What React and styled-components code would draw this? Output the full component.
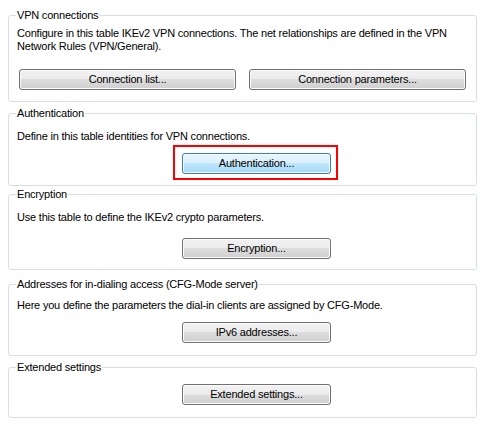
import React from "react";
import styled, { createGlobalStyle } from "styled-components";

const GlobalStyle = createGlobalStyle`
  html, body {
    margin: 0;
    padding: 0;
    background: #ffffff;
  }
  body {
    font-family: "Liberation Sans", Arial, sans-serif;
    font-size: 11px;
    letter-spacing: -0.2px;
    color: #000000;
  }
`;

const groups = [
  {
    title: "VPN connections",
    desc: "Configure in this table IKEv2 VPN connections. The net relationships are defined in the VPN Network Rules (VPN/General).",
    buttons: ["Connection list...", "Connection parameters..."],
    descGap: 5,
    btnGap: 16,
    pb: 11,
    mt: 0,
  },
  {
    title: "Authentication",
    desc: "Define in this table identities for VPN connections.",
    buttons: ["Authentication..."],
    highlight: true,
    descGap: 10,
    btnGap: 10,
    pb: 11,
    mt: 11,
  },
  {
    title: "Encryption",
    desc: "Use this table to define the IKEv2 crypto parameters.",
    buttons: ["Encryption..."],
    descGap: 10,
    btnGap: 14,
    pb: 10,
    mt: 8,
  },
  {
    title: "Addresses for in-dialing access (CFG-Mode server)",
    desc: "Here you define the parameters the dial-in clients are assigned by CFG-Mode.",
    buttons: ["IPv6 addresses..."],
    descGap: 8,
    btnGap: 10,
    pb: 12,
    mt: 14,
  },
  {
    title: "Extended settings",
    buttons: ["Extended settings..."],
    btnGap: 10,
    pb: 12,
    mt: 11,
  },
];

export default function App() {
  return (
    <>
      <GlobalStyle />
      <Page>
        {groups.map((g) => (
          <Group key={g.title} $mt={g.mt} $pb={g.pb}>
            <Legend>{g.title}</Legend>
            {g.desc && <Desc $gap={g.descGap}>{g.desc}</Desc>}
            {g.buttons.length > 1 ? (
              <ButtonPair $gap={g.btnGap}>
                {g.buttons.map((b) => (
                  <Button key={b}>{b}</Button>
                ))}
              </ButtonPair>
            ) : (
              <ButtonSingle $gap={g.btnGap}>
                <Button $fixed $active={g.highlight} $marked={g.highlight}>
                  {g.buttons[0]}
                </Button>
              </ButtonSingle>
            )}
          </Group>
        ))}
      </Page>
    </>
  );
}

const Page = styled.div`
  width: 469px;
  padding: 15px 0 0 8px;
  display: flex;
  flex-direction: column;
`;

const Group = styled.div`
  border: 1px solid #d5dfe5;
  border-radius: 3px;
  margin-top: ${(p) => p.$mt}px;
  padding: 0 0 ${(p) => p.$pb}px 0;
  display: flex;
  flex-direction: column;
`;

const Legend = styled.div`
  align-self: flex-start;
  margin: -7px 0 0 7px;
  padding: 0 1px;
  height: 13px;
  line-height: 13px;
  background: #ffffff;
  white-space: nowrap;
`;

const Desc = styled.div`
  margin-top: ${(p) => p.$gap}px;
  padding: 0 10px 0 8px;
  line-height: 13px;
`;

const ButtonPair = styled.div`
  margin-top: ${(p) => p.$gap}px;
  padding: 0 10px;
  display: grid;
  grid-template-columns: 1fr 1fr;
  column-gap: 13px;
`;

const ButtonSingle = styled.div`
  margin-top: ${(p) => p.$gap}px;
  padding-left: 173px;
  display: flex;
`;

const Button = styled.div`
  position: relative;
  box-sizing: border-box;
  height: 21px;
  width: ${(p) => (p.$fixed ? "149px" : "auto")};
  border: 1px solid ${(p) => (p.$active ? "#3c7fb1" : "#707070")};
  border-radius: 3px;
  box-shadow: inset 0 0 0 1px ${(p) => (p.$active ? "#f5fbfe" : "#fbfbfb")};
  background: ${(p) =>
    p.$active
      ? "linear-gradient(#eaf6fd 0%, #d9f0fc 50%, #bee6fd 50%, #a7d9f5 100%)"
      : "linear-gradient(#f2f2f2 0%, #ebebeb 50%, #dddddd 50%, #cfcfcf 100%)"};
  display: flex;
  align-items: center;
  justify-content: center;
  line-height: 13px;
  white-space: nowrap;

  ${(p) =>
    p.$marked &&
    `
    &::after {
      content: "";
      position: absolute;
      top: -9px;
      left: -10px;
      right: -8px;
      bottom: -7px;
      border: 2px solid #ff0000;
    }
  `}
`;
